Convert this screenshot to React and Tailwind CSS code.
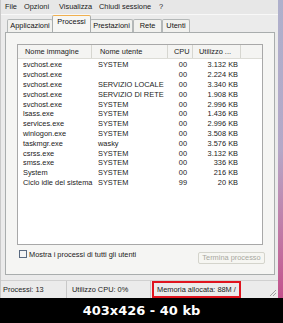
const ROWS = [
  ['svchost.exe', 'SYSTEM', '00', '3.132 KB'],
  ['svchost.exe', '', '00', '2.224 KB'],
  ['svchost.exe', 'SERVIZIO LOCALE', '00', '3.340 KB'],
  ['svchost.exe', 'SERVIZIO DI RETE', '00', '1.908 KB'],
  ['svchost.exe', 'SYSTEM', '00', '2.996 KB'],
  ['lsass.exe', 'SYSTEM', '00', '1.436 KB'],
  ['services.exe', 'SYSTEM', '00', '2.996 KB'],
  ['winlogon.exe', 'SYSTEM', '00', '3.508 KB'],
  ['taskmgr.exe', 'wasky', '00', '3.576 KB'],
  ['csrss.exe', 'SYSTEM', '00', '3.132 KB'],
  ['smss.exe', 'SYSTEM', '00', '336 KB'],
  ['System', 'SYSTEM', '00', '216 KB'],
  ['Ciclo idle del sistema', 'SYSTEM', '99', '20 KB'],
]

const MENU = [['File', 'w-[19px]'], ['Opzioni', 'w-[35px]'], ['Visualizza', 'w-[40px]'], ['Chiudi sessione', 'w-[60px]'], ['?', 'w-[8px]']]

const TABS = [
  ['Applicazioni', 'w-[46px]'],
  ['Processi', 'w-[39px]'],
  ['Prestazioni', 'w-[43px]'],
  ['Rete', 'w-[29px]'],
  ['Utenti', 'w-[28px]'],
]

function Tab({ label, width, active }) {
  if (active) {
    return (
      <div className={`${width} h-[17px] -mx-[1px] relative z-10 bg-[#f6f6f4] border border-b-0 border-[#a9adad] border-t-[#f0b050] rounded-t-[2px] flex items-start justify-center pt-[2px] text-[#111]`}>
        {label}
      </div>
    )
  }
  return (
    <div className={`${width} h-[13px] bg-[#f1f1ee] border border-b-0 border-[#b4b8b8] rounded-t-[2px] flex items-center justify-center text-[#111]`}>
      {label}
    </div>
  )
}

export default function App() {
  return (
    <div className="w-[283px] h-[323px] flex flex-col bg-black overflow-hidden text-[7.4px] leading-none font-['Liberation_Sans',Arial,sans-serif]">
      <div className="h-[298px] flex">
        <div className="flex-1 flex flex-col bg-[#ebebeb] border-l border-[#c9c9c9]">
          {/* menu */}
          <div className="h-[15px] flex items-center pl-[4px] border-b border-[#f8f8f8] text-[#1a1a1a] bg-[#e7e7e7]">
            {MENU.map(([m, w]) => (
              <span key={m} className={w}>{m}</span>
            ))}
          </div>

          {/* tabs */}
          <div className="h-[17px] flex items-end pl-[6px]">
            {TABS.map(([t, w]) => (
              <Tab key={t} label={t} width={w} active={t === 'Processi'} />
            ))}
          </div>

          {/* panel */}
          <div className="ml-[4px] mr-[3px] h-[243px] bg-[#f5f5f3] border border-[#a9adad] flex flex-col px-[11px] pt-[11px]">
            <div className="h-[201px] bg-white border border-[#a8a8a8] flex flex-col">
              <div className="h-[14px] flex items-center bg-[#f4f4f2] border-b border-[#dcdcd6] text-[#222]">
                <div className="w-[74px] pl-[7px] h-full flex items-center border-r border-[#d6d6d0]">Nome immagine</div>
                <div className="w-[76px] pl-[8px] h-full flex items-center border-r border-[#d6d6d0]">Nome utente</div>
                <div className="w-[25px] pl-[6px] h-full flex items-center border-r border-[#d6d6d0]">CPU</div>
                <div className="w-[48px] pl-[6px] h-full flex items-center border-r border-[#d6d6d0]">Utilizzo ...</div>
                <div className="flex-1" />
              </div>
              <div className="flex flex-col pt-[1px] text-[#1a1a1a]">
                {ROWS.map((r, i) => (
                  <div key={i} className="h-[9.83px] flex items-center">
                    <div className="w-[74px] pl-[5px] whitespace-nowrap">{r[0]}</div>
                    <div className="w-[76px] pl-[6px] whitespace-nowrap">{r[1]}</div>
                    <div className="w-[25px] pr-[6px] text-right">{r[2]}</div>
                    <div className="w-[48px] pr-[3px] text-right">{r[3]}</div>
                  </div>
                ))}
              </div>
            </div>
            <div className="flex items-start mt-[4px]">
              <div className="w-[8px] h-[8px] mt-[1px] ml-[2px] border border-[#5a6a80] bg-[#f4f4f4]" />
              <span className="ml-[2px] mt-[2px] text-[#1a1a1a]">Mostra i processi di tutti gli utenti</span>
              <div className="flex-1" />
              <div className="w-[67px] h-[12px] mt-[3px] -mr-[2px] border border-[#d4d4cc] rounded-[2px] bg-[#f6f6f2] flex items-center justify-center text-[#a8a8a0]">
                Termina processo
              </div>
            </div>
          </div>

          {/* status bar */}
          <div className="mt-[5px] h-[18px] flex items-center border-t border-[#d0d0d0] text-[#1a1a1a]">
            <div className="w-[66px] pl-[2px] h-full flex items-center border-r border-[#c8c8c8]">Processi: 13</div>
            <div className="w-[84px] pl-[5px] h-full flex items-center border-r border-[#c8c8c8]">Utilizzo CPU: 0%</div>
            <div className="flex-1 pl-[1px] h-full flex items-end">
              <div className="h-[17px] px-[3px] flex items-center border-2 border-[#e0141e]">Memoria allocata: 88M /</div>
              <div className="flex-1" />
              <svg width="8" height="8" viewBox="0 0 8 8" className="mr-[1px] mb-[1px]">
                <path d="M7 1 L1 7 M7 4 L4 7" stroke="#a0a0a0" strokeWidth="1" />
              </svg>
            </div>
          </div>
        </div>
        <div className="w-[5px] bg-linear-to-b from-[#aeb0cc] via-[#b4a8c8] to-[#c2508c]" />
      </div>

      <div className="flex-1 flex items-center justify-center text-white font-bold text-[13px] font-['DejaVu_Sans',Verdana,sans-serif]">
        403x426 - 40 kb
      </div>
    </div>
  )
}
